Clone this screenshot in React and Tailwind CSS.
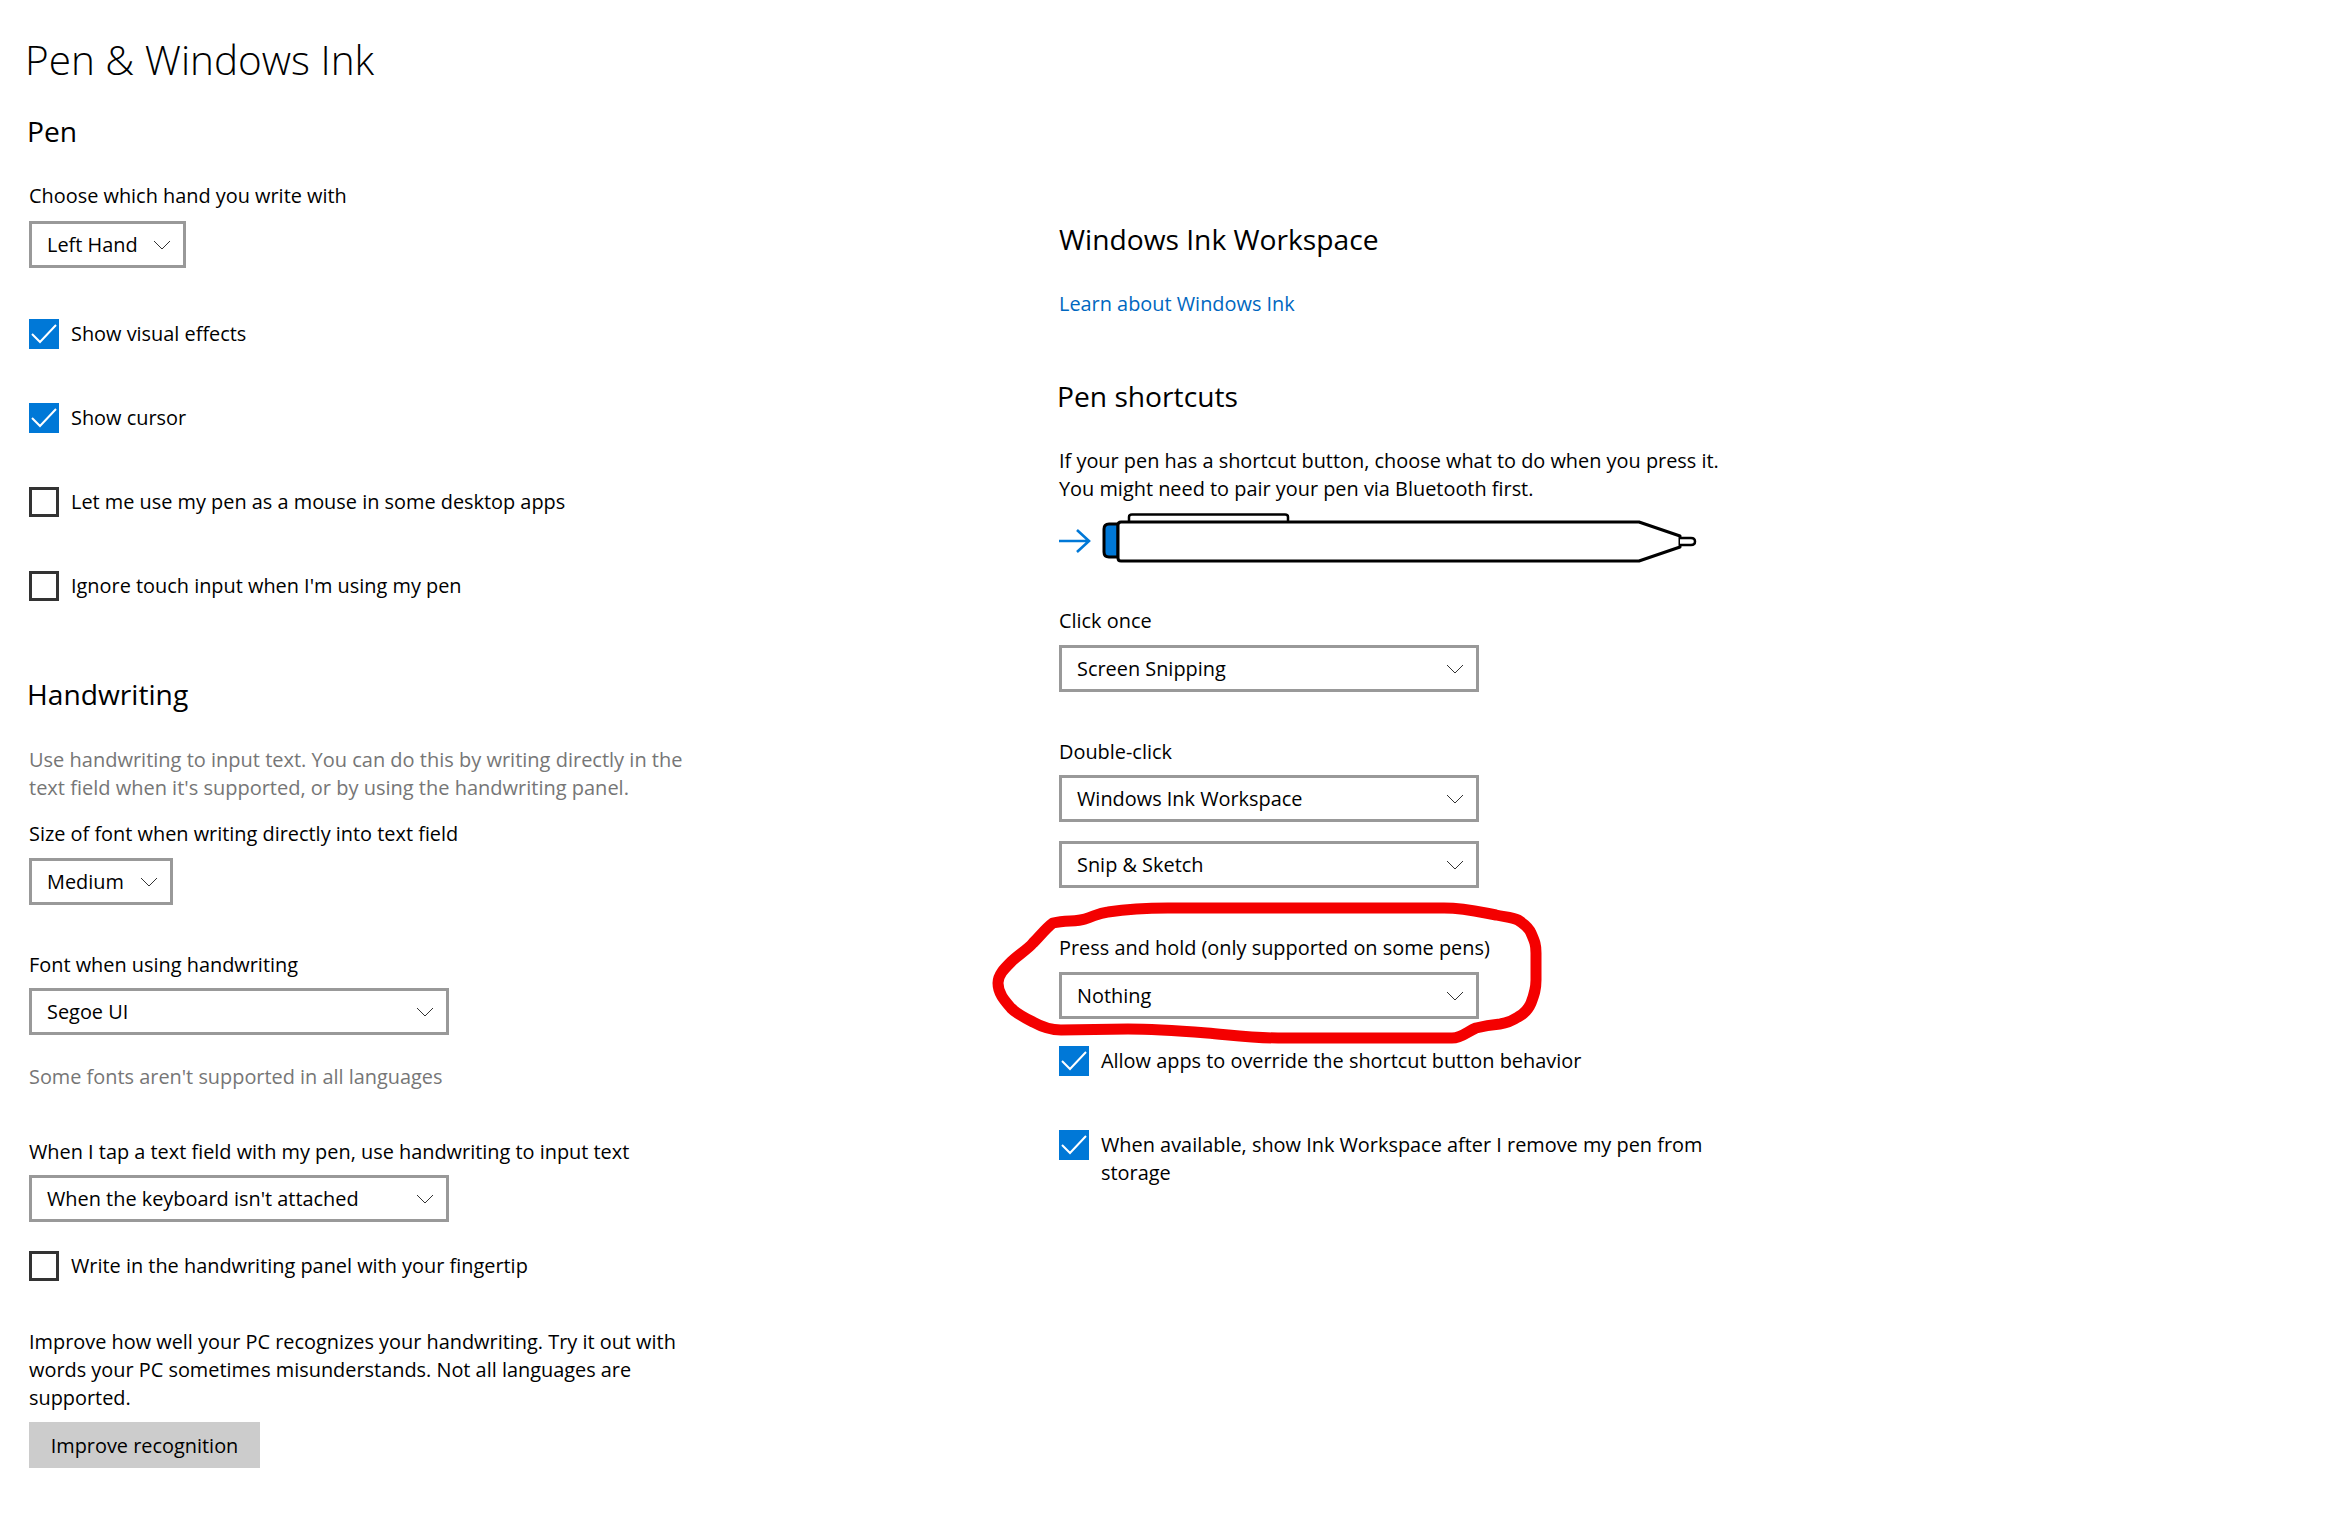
function Chevron() {
  return (
    <svg width="18" height="10" viewBox="0 0 18 10" fill="none" className="shrink-0">
      <path d="M1 1l8 8 8-8" stroke="#333" strokeWidth="1" />
    </svg>
  );
}

function Select({ value, width, className = "" }) {
  return (
    <div className={`flex h-[47px] items-center justify-between border-[3px] border-[#999] bg-white pl-[15px] pr-[12px] text-[19.9px] leading-[28px] whitespace-nowrap ${width} ${className}`}>
      <span className="pt-px">{value}</span>
      <Chevron />
    </div>
  );
}

function Check({ checked, label, className = "" }) {
  return (
    <div className={`flex items-start gap-3 text-[19.9px] leading-[28px] ${className}`}>
      {checked ? (
        <div className="h-[30px] w-[30px] shrink-0 bg-[#0078d7]">
          <svg width="30" height="30" viewBox="0 0 30 30" fill="none">
            <path d="M3 15l8 8L27 6" stroke="#fff" strokeWidth="2" />
          </svg>
        </div>
      ) : (
        <div className="h-[30px] w-[30px] shrink-0 border-[3px] border-[#333]" />
      )}
      <div className="pt-px whitespace-nowrap">{label}</div>
    </div>
  );
}

function Label({ children, className = "" }) {
  return <div className={`h-[28px] text-[19.9px] leading-[30px] whitespace-nowrap ${className}`}>{children}</div>;
}

function Heading({ children, className = "" }) {
  return <div className={`h-[40px] text-[28.2px] leading-[38px] whitespace-nowrap ${className}`}>{children}</div>;
}

function PenDrawing() {
  return (
    <svg width="642" height="52" viewBox="1058 513 642 52" fill="none" className="block">
      <path d="M1059 541h30M1077 530l12 11-12 11" stroke="#0078d7" strokeWidth="2.6" />
      <path d="M1118 524h-9q-5 0-5 5v23q0 5 5 5h9z" fill="#0078d7" stroke="#000" strokeWidth="3" strokeLinejoin="round" />
      <path d="M1129 521v-4q0-2.500 3-2.500h153q3 0 3 2.500v4" stroke="#000" strokeWidth="2.500" />
      <path d="M1118 525q0-3 3-3h518l41 14v11l-41 14h-518q-3 0-3-3z" fill="#fff" stroke="#000" strokeWidth="3" strokeLinejoin="round" />
      <path d="M1680 538h11q4 0 4 3.500t-4 3.500h-11" fill="#fff" stroke="#000" strokeWidth="2.500" />
    </svg>
  );
}

function Scribble() {
  return (
    <svg width="2350" height="1539" viewBox="0 0 2350 1539" fill="none" className="pointer-events-none absolute top-0 left-0">
      <path
        d="M1053 923C1066 920 1076 922 1085 919C1095 916 1098 913 1108 912C1128 909 1148 908 1168 908L1286 908L1444 908C1465 908 1480 912 1496 915C1505 917 1512 917 1518 920C1526 925 1529 928 1531 933C1535 942 1536 945 1536 953L1536 980C1536 990 1534 995 1531 1003C1528 1010 1524 1014 1518 1017C1512 1021 1507 1023 1500 1024C1490 1025 1484 1026 1476 1028C1468 1031 1462 1038 1452 1038L1365 1038L1278 1038C1254 1038 1231 1035 1207 1033C1181 1031 1154 1029 1128 1029L1061 1030C1050 1030 1042 1027 1033 1022C1025 1018 1017 1014 1011 1008C1004 1000 998 993 998 983C998 975 1004 969 1011 962C1018 955 1027 950 1033 943C1040 936 1046 928 1053 923Z"
        stroke="#f40000"
        strokeWidth="11"
        strokeLinejoin="round"
      />
    </svg>
  );
}

export default function App() {
  return (
    <div className="relative flex min-h-[1539px] bg-white font-['Open_Sans','Liberation_Sans',sans-serif] text-black">
      <div className="w-[1059px] shrink-0 pl-[29px]">
        <h1 className="-ml-[4px] pt-[30px] text-[40.5px] leading-[60px] font-light whitespace-nowrap">Pen &amp; Windows Ink</h1>
        <Heading className="-ml-[2px] mt-[22px]">Pen</Heading>
        <Label className="mt-[29px]">Choose which hand you write with</Label>
        <Select value="Left Hand" width="w-[157px]" className="mt-[12px]" />
        <Check checked label="Show visual effects" className="mt-[51px]" />
        <Check checked label="Show cursor" className="mt-[54px]" />
        <Check label="Let me use my pen as a mouse in some desktop apps" className="mt-[54px]" />
        <Check label="Ignore touch input when I'm using my pen" className="mt-[54px]" />
        <Heading className="-ml-[2px] mt-[74px]">Handwriting</Heading>
        <div className="mt-[31px] text-[20px] leading-[28px] whitespace-nowrap text-[#767676]">
          Use handwriting to input text. You can do this by writing directly in the
          <br />
          text field when it's supported, or by using the handwriting panel.
        </div>
        <Label className="mt-[17px]">Size of font when writing directly into text field</Label>
        <Select value="Medium" width="w-[144px]" className="mt-[11px]" />
        <Label className="mt-[45px]">Font when using handwriting</Label>
        <Select value="Segoe UI" width="w-[420px]" className="mt-[10px]" />
        <Label className="mt-[27px] text-[#767676]">Some fonts aren't supported in all languages</Label>
        <Label className="mt-[47px]">When I tap a text field with my pen, use handwriting to input text</Label>
        <Select value="When the keyboard isn't attached" width="w-[420px]" className="mt-[10px]" />
        <Check label="Write in the handwriting panel with your fingertip" className="mt-[29px]" />
        <div className="mt-[47px] text-[19.9px] leading-[28px] whitespace-nowrap">
          Improve how well your PC recognizes your handwriting. Try it out with
          <br />
          words your PC sometimes misunderstands. Not all languages are
          <br />
          supported.
        </div>
        <button className="mt-[10px] block h-[46px] w-[231px] bg-[#ccc] pt-[2px] text-[19.9px] leading-[28px]">Improve recognition</button>
      </div>
      <div className="grow pt-[220px]">
        <Heading>Windows Ink Workspace</Heading>
        <Label className="mt-[29px] text-[#0067c0]">Learn about Windows Ink</Label>
        <Heading className="-ml-[2px] mt-[60px]">Pen shortcuts</Heading>
        <div className="mt-[30px] text-[19.9px] leading-[28px] whitespace-nowrap">
          If your pen has a shortcut button, choose what to do when you press it.
          <br />
          You might need to pair your pen via Bluetooth first.
        </div>
        <div className="-ml-[1px] mt-[10px]">
          <PenDrawing />
        </div>
        <Label className="mt-[41px]">Click once</Label>
        <Select value="Screen Snipping" width="w-[420px]" className="mt-[11px]" />
        <Label className="mt-[45px]">Double-click</Label>
        <Select value="Windows Ink Workspace" width="w-[420px]" className="mt-[10px]" />
        <Select value="Snip & Sketch" width="w-[420px]" className="mt-[19px]" />
        <Label className="mt-[45px]">Press and hold (only supported on some pens)</Label>
        <Select value="Nothing" width="w-[420px]" className="mt-[11px]" />
        <Check checked label="Allow apps to override the shortcut button behavior" className="mt-[27px]" />
        <Check
          checked
          label={
            <>
              When available, show Ink Workspace after I remove my pen from
              <br />
              storage
            </>
          }
          className="mt-[54px]"
        />
      </div>
      <Scribble />
    </div>
  );
}
